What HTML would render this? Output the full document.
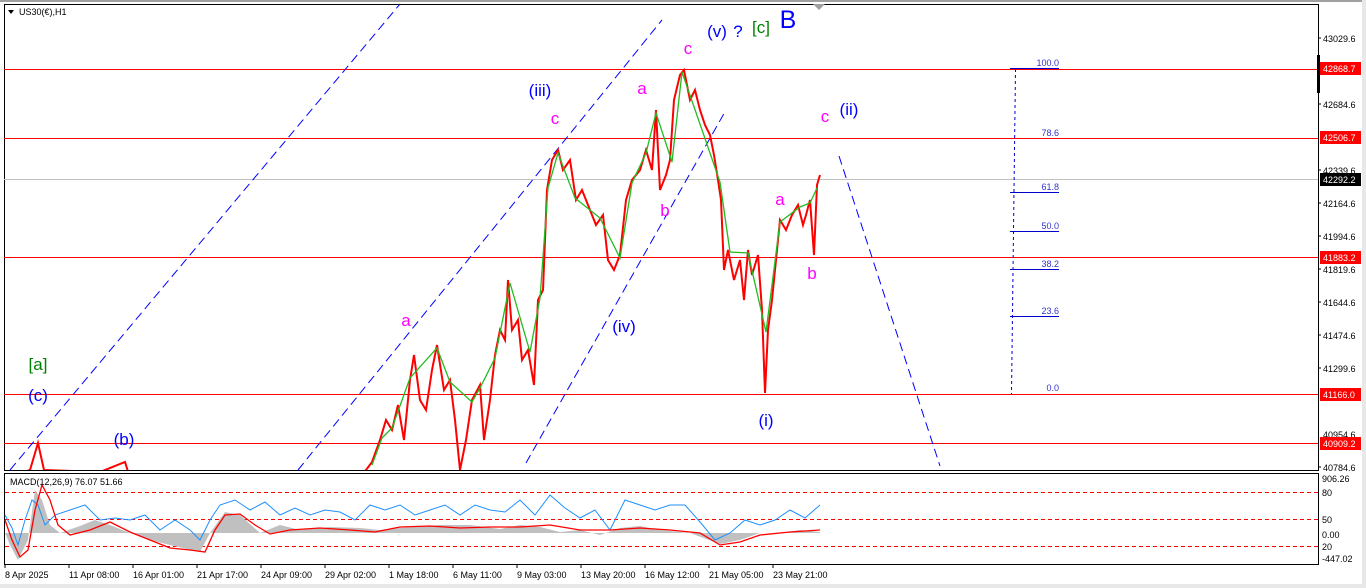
<!DOCTYPE html>
<html><head><meta charset="utf-8"><style>
html,body{margin:0;padding:0;background:#fff;}
svg{display:block;font-family:"Liberation Sans",Tahoma,sans-serif;}
</style></head><body>
<svg width="1366" height="588" viewBox="0 0 1366 588" xmlns="http://www.w3.org/2000/svg">
<rect width="1366" height="588" fill="#fff"/>
<rect x="0" y="0" width="1366" height="2" fill="#a0a0a0"/>
<rect x="1362" y="0" width="4" height="588" fill="#e8e8e8"/>
<rect x="0" y="584" width="1366" height="4" fill="#e8e8e8"/>
<!-- main frame -->
<rect x="4.5" y="4.5" width="1314" height="466" fill="none" stroke="#000"/>
<rect x="4.5" y="473.5" width="1314" height="91" fill="none" stroke="#000"/>
<polygon points="813,4 825,4 819,10" fill="#a0a0a0"/>
<!-- top-left symbol -->
<polygon points="8,10 14,10 11,14" fill="#000"/>
<text x="19" y="15" font-size="9" fill="#000">US30(€),H1</text>
<!-- horizontal levels -->
<g stroke="#ff0000" stroke-width="1">
<line x1="4" y1="69.5" x2="1318" y2="69.5"/>
<line x1="4" y1="138.5" x2="1318" y2="138.5"/>
<line x1="4" y1="257.5" x2="1318" y2="257.5"/>
<line x1="4" y1="394.5" x2="1318" y2="394.5"/>
<line x1="4" y1="443.5" x2="1318" y2="443.5"/>
</g>
<line x1="4" y1="179.5" x2="1318" y2="179.5" stroke="#c0c0c0"/>
<!-- channel dashed lines -->
<g stroke="#0000ff" stroke-width="1" stroke-dasharray="9,5" fill="none">
<line x1="10" y1="470" x2="400" y2="4"/>
<line x1="298" y1="470" x2="662" y2="20"/>
<line x1="526" y1="463" x2="726" y2="110"/>
<line x1="839" y1="156" x2="940" y2="466"/>
</g>
<!-- fibo -->
<g stroke="#0000cc" stroke-width="1">
<line x1="1010" y1="68.5" x2="1059" y2="68.5"/>
<line x1="1010" y1="192.5" x2="1059" y2="192.5"/>
<line x1="1010" y1="231.5" x2="1059" y2="231.5"/>
<line x1="1010" y1="269.5" x2="1059" y2="269.5"/>
<line x1="1010" y1="316.5" x2="1059" y2="316.5"/>
<line x1="1015.5" y1="69" x2="1011.5" y2="394" stroke-dasharray="3,3"/>
</g>
<g font-size="9" fill="#3333cc" text-anchor="end">
<text x="1059" y="66">100.0</text><text x="1059" y="136">78.6</text>
<text x="1059" y="190">61.8</text><text x="1059" y="229">50.0</text>
<text x="1059" y="267">38.2</text><text x="1059" y="314">23.6</text>
<text x="1059" y="391">0.0</text>
</g>
<!-- price path -->
<clipPath id="cp"><rect x="5" y="5" width="1313" height="465"/></clipPath>
<g clip-path="url(#cp)" fill="none" stroke-width="2">
<polyline stroke="#ff0000" points="5,478 30,470 38,443 44,470 100,472 125,462 130,478 360,478 372,462 380,440 386,420 392,430 398,405 404,440 410,380 414,355 420,400 426,410 432,370 437,345 444,390 450,380 455,420 460,470 466,440 472,400 480,385 484,440 490,400 495,355 500,330 505,340 508,280 512,330 518,320 522,360 528,350 534,385 538,300 543,290 547,190 552,160 558,150 563,170 570,160 576,200 582,190 590,210 596,225 603,215 608,260 614,270 620,255 626,200 632,180 640,170 646,150 652,170 656,110 660,190 666,175 670,160 674,100 680,75 684,70 690,100 695,90 700,110 705,125 710,135 714,155 718,180 721,200 724,270 728,250 734,280 740,260 744,300 748,250 752,275 758,255 762,310 765,393 768,330 772,300 776,260 780,220 786,230 792,215 798,205 803,225 806,215 810,200 814,255 817,185 820,175"/>
<polyline stroke="#22bb22" stroke-width="1.3" points="372,465 382,438 392,428 410,378 437,348 450,382 472,402 480,388 495,358 510,283 530,352 540,298 548,188 558,153 575,198 600,218 620,258 632,183 646,153 656,113 672,162 682,72 720,182 730,252 748,253 766,332 780,222 800,207 810,203 817,188"/>
</g>
<!-- wave labels -->
<g font-size="17" text-anchor="middle">
<text x="38" y="370" fill="#008000">[a]</text>
<text x="38" y="401" fill="#0000ff">(c)</text>
<text x="124" y="445" fill="#0000ff">(b)</text>
<text x="540" y="96" fill="#0000ff">(iii)</text>
<text x="624" y="332" fill="#0000ff">(iv)</text>
<text x="717" y="37" fill="#0000ff">(v)</text>
<text x="738" y="37" fill="#0000ff">?</text>
<text x="761" y="33" fill="#008000">[c]</text>
<text x="788" y="28" fill="#0000ff" font-size="25">B</text>
<text x="849" y="115" fill="#0000ff">(ii)</text>
<text x="766" y="426" fill="#0000ff">(i)</text>
<text x="406" y="326" fill="#ff00ff">a</text>
<text x="555" y="124" fill="#ff00ff">c</text>
<text x="642" y="94" fill="#ff00ff">a</text>
<text x="688" y="54" fill="#ff00ff">c</text>
<text x="665" y="216" fill="#ff00ff">b</text>
<text x="780" y="205" fill="#ff00ff">a</text>
<text x="812" y="279" fill="#ff00ff">b</text>
<text x="825" y="122" fill="#ff00ff">c</text>
</g>
<!-- right axis -->
<g font-size="9" fill="#000">
<g stroke="#000"><line x1="1318" y1="38" x2="1321" y2="38"/><line x1="1318" y1="104" x2="1321" y2="104"/><line x1="1318" y1="170" x2="1321" y2="170"/><line x1="1318" y1="203" x2="1321" y2="203"/><line x1="1318" y1="236" x2="1321" y2="236"/><line x1="1318" y1="269" x2="1321" y2="269"/><line x1="1318" y1="302" x2="1321" y2="302"/><line x1="1318" y1="335" x2="1321" y2="335"/><line x1="1318" y1="368" x2="1321" y2="368"/><line x1="1318" y1="467" x2="1321" y2="467"/></g>
<text x="1323" y="42">43029.6</text>
<text x="1323" y="108">42684.6</text>
<text x="1323" y="174">42339.6</text>
<text x="1323" y="207">42164.6</text>
<text x="1323" y="240">41994.6</text>
<text x="1323" y="273">41819.6</text>
<text x="1323" y="306">41644.6</text>
<text x="1323" y="339">41474.6</text>
<text x="1323" y="372">41299.6</text>
<text x="1323" y="438">40954.6</text>
<text x="1323" y="471">40784.6</text>
<rect x="1317" y="55" width="3" height="38" fill="#000"/>
<rect x="1320" y="62" width="41" height="13" fill="#ff0000"/><text x="1323" y="72" fill="#fff">42868.7</text>
<rect x="1320" y="131" width="41" height="13" fill="#ff0000"/><text x="1323" y="141" fill="#fff">42506.7</text>
<rect x="1320" y="173" width="41" height="13" fill="#000"/><text x="1323" y="183" fill="#fff">42292.2</text>
<rect x="1320" y="251" width="41" height="13" fill="#ff0000"/><text x="1323" y="261" fill="#fff">41883.2</text>
<rect x="1320" y="388" width="41" height="13" fill="#ff0000"/><text x="1323" y="398" fill="#fff">41166.0</text><text x="1323" y="406" font-size="6"> </text>
<rect x="1320" y="437" width="41" height="13" fill="#ff0000"/><text x="1323" y="447" fill="#fff">40909.2</text>
</g>
<!-- MACD -->
<g stroke="#ff0000" stroke-dasharray="4,3">
<line x1="5" y1="492.5" x2="1318" y2="492.5"/>
<line x1="5" y1="519.5" x2="1318" y2="519.5"/>
<line x1="5" y1="546.5" x2="1318" y2="546.5"/>
</g>
<path d="M5,533 L10,545 L18,560 L28,540 L35,490 L42,500 L50,525 L60,533 Z M60,533 L80,526 L95,520 L110,525 L130,533 L150,540 L170,545 L200,552 L210,533 L225,512 L240,515 L260,533 L280,525 L300,530 L330,527 L360,528 L380,530 L400,528 L440,525 L470,525 L500,529 L520,525 L540,527 L560,532 L580,530 L600,535 L620,528 L640,526 L660,530 L690,533 L720,544 L740,540 L760,533 L780,533 L800,530 L820,532 L820,533 Z" fill="#c0c0c0"/>
<polyline fill="none" stroke="#1e90ff" stroke-width="1" points="5,515 12,528 18,545 25,520 32,500 38,505 45,525 55,515 70,510 85,505 100,520 115,518 130,520 145,515 160,530 175,520 190,530 200,540 210,520 220,505 235,500 250,510 265,502 280,515 295,508 310,515 325,510 340,512 355,520 370,505 385,510 400,505 415,515 430,510 445,505 460,515 475,505 490,510 505,512 520,500 535,515 550,495 565,508 580,518 595,510 610,530 625,500 640,505 655,510 670,505 685,505 700,522 715,540 730,533 745,520 760,525 775,520 790,510 805,518 820,505"/>
<polyline fill="none" stroke="#ff0000" stroke-width="1.3" points="5,520 12,540 20,557 28,550 35,510 42,485 50,500 58,525 70,535 90,530 110,522 130,532 150,540 170,548 190,550 205,552 215,530 225,515 240,514 255,525 270,534 290,530 320,528 350,530 375,532 400,527 430,526 460,528 490,527 520,527 550,525 580,530 610,530 640,528 670,530 700,533 720,545 740,542 760,535 790,532 820,530"/>
<text x="10" y="485" font-size="9" fill="#000">MACD(12,26,9) 76.07 51.66</text>
<g font-size="9" fill="#000">
<text x="1322" y="482">906.26</text>
<text x="1322" y="496">80</text>
<text x="1322" y="523">50</text>
<text x="1322" y="538">0.00</text>
<text x="1322" y="550">20</text>
<text x="1322" y="562">-447.02</text>
</g>
<!-- time axis -->
<g font-size="9" fill="#000" stroke="#000">
<line x1="5" y1="565" x2="5" y2="568"/><line x1="69" y1="565" x2="69" y2="568"/><line x1="133" y1="565" x2="133" y2="568"/><line x1="197" y1="565" x2="197" y2="568"/><line x1="261" y1="565" x2="261" y2="568"/><line x1="325" y1="565" x2="325" y2="568"/><line x1="389" y1="565" x2="389" y2="568"/><line x1="453" y1="565" x2="453" y2="568"/><line x1="517" y1="565" x2="517" y2="568"/><line x1="581" y1="565" x2="581" y2="568"/><line x1="645" y1="565" x2="645" y2="568"/><line x1="709" y1="565" x2="709" y2="568"/><line x1="773" y1="565" x2="773" y2="568"/>
</g>
<g font-size="9" fill="#000">
<text x="5" y="578">8 Apr 2025</text>
<text x="69" y="578">11 Apr 08:00</text>
<text x="133" y="578">16 Apr 01:00</text>
<text x="197" y="578">21 Apr 17:00</text>
<text x="261" y="578">24 Apr 09:00</text>
<text x="325" y="578">29 Apr 02:00</text>
<text x="389" y="578">1 May 18:00</text>
<text x="453" y="578">6 May 11:00</text>
<text x="517" y="578">9 May 03:00</text>
<text x="581" y="578">13 May 20:00</text>
<text x="645" y="578">16 May 12:00</text>
<text x="709" y="578">21 May 05:00</text>
<text x="773" y="578">23 May 21:00</text>
</g>
</svg>
</body></html>
